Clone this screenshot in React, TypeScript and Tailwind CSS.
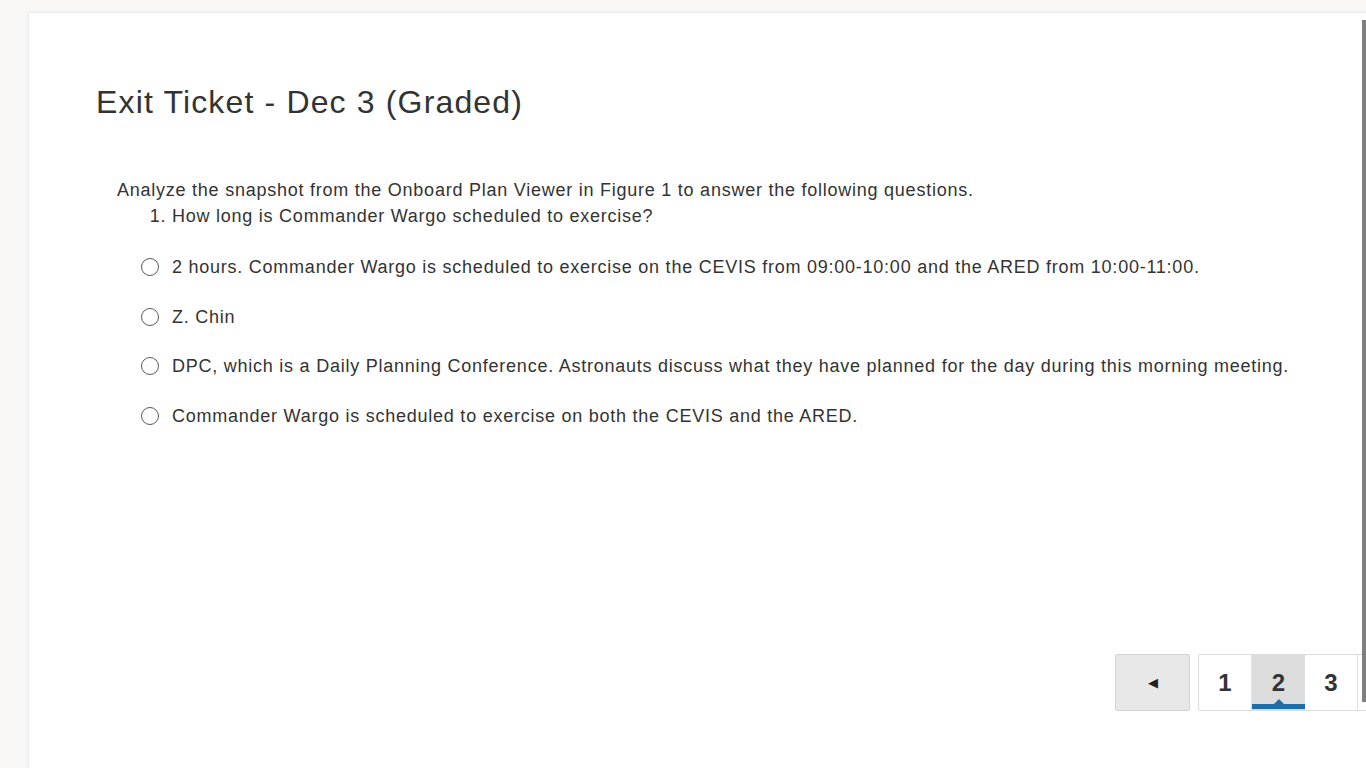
const options = [
  '2 hours. Commander Wargo is scheduled to exercise on the CEVIS from 09:00-10:00 and the ARED from 10:00-11:00.',
  'Z. Chin',
  'DPC, which is a Daily Planning Conference. Astronauts discuss what they have planned for the day during this morning meeting.',
  'Commander Wargo is scheduled to exercise on both the CEVIS and the ARED.',
];

export default function App() {
  return (
    <div
      className="relative w-[1366px] h-[768px] overflow-hidden bg-[#f9f8f6] text-[#333333]"
      style={{ fontFamily: '"Liberation Sans", Arial, sans-serif' }}
    >
      {/* card */}
      <div className="ml-[28px] mt-[12px] w-[1420px] h-[800px] bg-white border border-[#ededed] shadow-[0_0_3px_rgba(0,0,0,0.06)] pl-[67px] pt-[70px]">
        <h1 className="text-[32px] leading-[38px] font-normal tracking-[0.036em]">Exit Ticket - Dec 3 (Graded)</h1>

        <div className="mt-[56px] pl-[21px] text-[18px] leading-[26px] tracking-[0.042em]">
          <p>Analyze the snapshot from the Onboard Plan Viewer in Figure 1 to answer the following questions.</p>
          <ol className="list-decimal pl-[55px]">
            <li>How long is Commander Wargo scheduled to exercise?</li>
          </ol>

          <div className="mt-[25px] flex flex-col gap-[23.7px]">
            {options.map((o, i) => (
              <label key={i} className="flex items-center h-[26px]">
                <span className="ml-[24px] w-[18px] h-[18px] rounded-full border border-[#5a5a5a] bg-white" />
                <span className="ml-[13px]">{o}</span>
              </label>
            ))}
          </div>
        </div>

        {/* pagination */}
        <div className="mt-[225px] ml-[1019px] flex items-start">
          <button className="w-[75px] h-[57px] bg-[#e8e8e8] border border-[#d3d3d3] rounded-[2px] flex items-center justify-center text-[#222] text-[13px]">
            ◀
          </button>
          <div className="ml-[8px] flex h-[57px] border border-[#dcdcdc] rounded-[2px] bg-white">
            {['1', '2', '3', ''].map((n, i) => (
              <div
                key={i}
                className={
                  n === '2'
                    ? 'relative w-[53px] h-full flex items-center justify-center bg-[#dcdcdc] text-[24px] font-bold'
                    : 'relative w-[53px] h-full flex items-center justify-center border-r border-[#e2e2e2] text-[24px] font-bold'
                }
              >
                {n}
                {n === '2' && (
                  <>
                    <span className="absolute left-0 right-0 bottom-[1px] h-[5px] bg-[#1f6eac]" />
                    <span className="absolute left-1/2 -translate-x-1/2 bottom-[6px] w-0 h-0 border-l-[5px] border-r-[5px] border-b-[5px] border-l-transparent border-r-transparent border-b-[#1f6eac]" />
                  </>
                )}
              </div>
            ))}
          </div>
        </div>
      </div>

      {/* scrollbar thumb */}
      <div className="absolute left-[1362px] top-[20px] w-[4px] h-[682px] bg-[#7f7f7f]" />
    </div>
  );
}
